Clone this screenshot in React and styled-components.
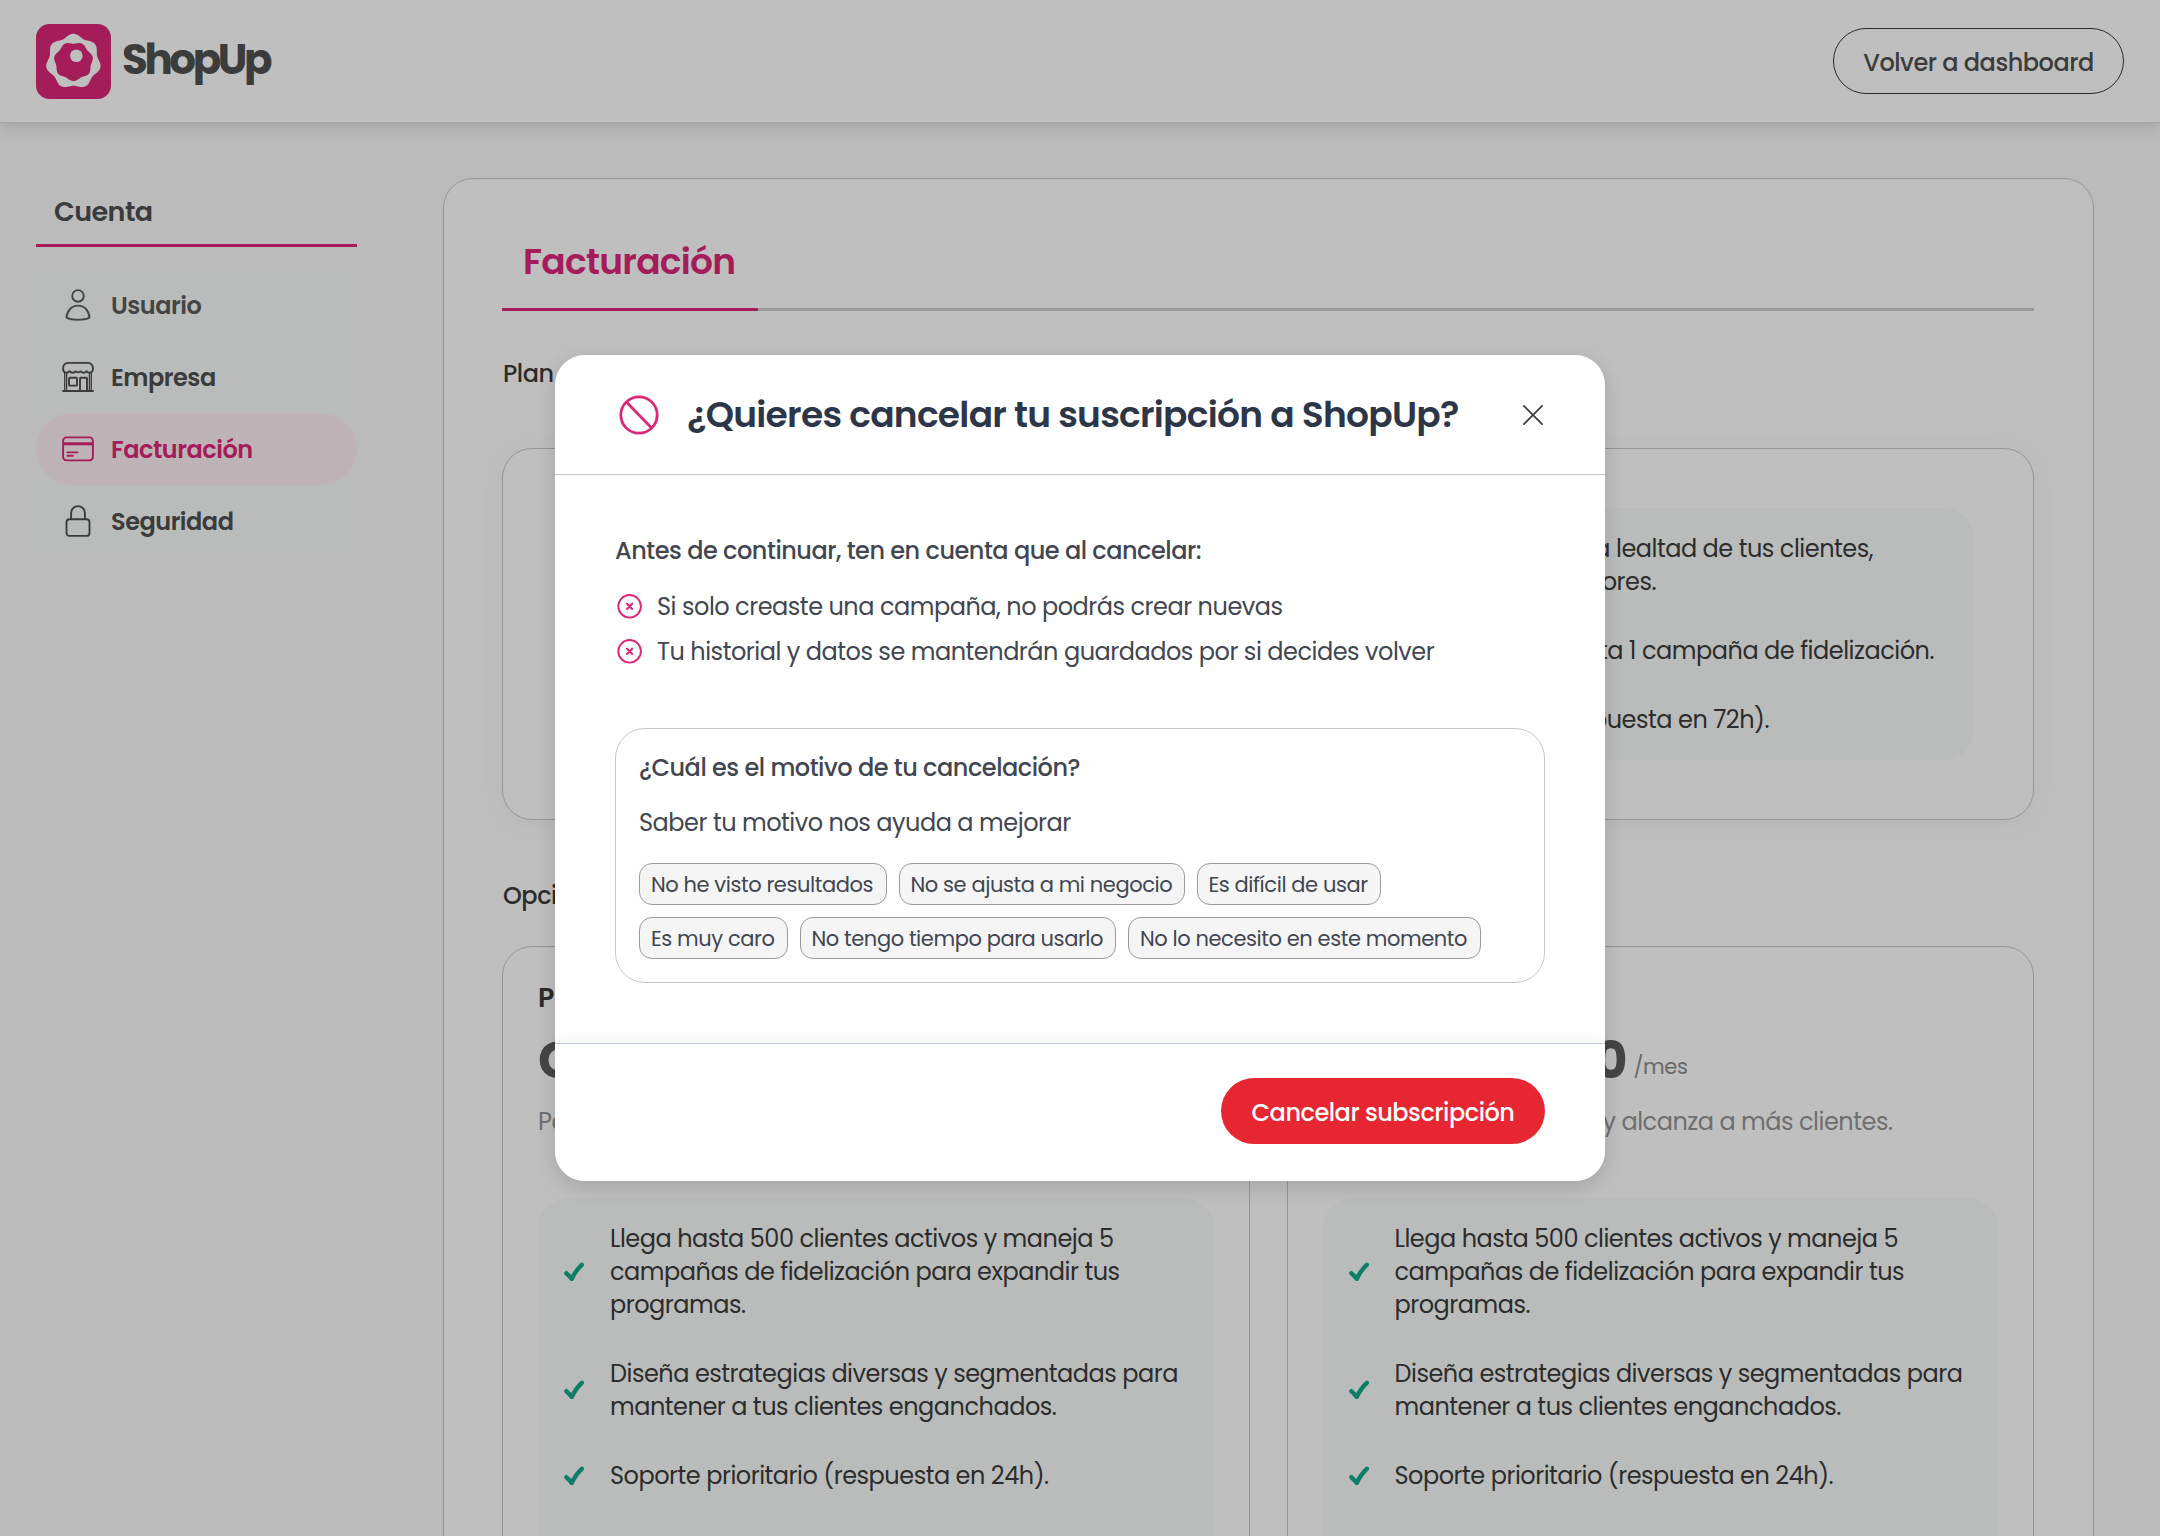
import React from 'react';
import styled, { createGlobalStyle } from 'styled-components';

const PINK = '#db2777';

const GlobalStyle = createGlobalStyle`
  *, *::before, *::after { box-sizing: border-box; letter-spacing: -0.02em; }
  body {
    margin: 0;
    background: #fafafa;
    font-family: Poppins, Inter, "Open Sans", sans-serif;
    font-size: 24px;
    line-height: 33px;
    color: #3b3b3b;
  }
  button { font: inherit; margin: 0; cursor: pointer; white-space: nowrap; }
`;

/* ---------- Page shell ---------- */
const Page = styled.div`
  position: relative;
  height: 1536px;
  overflow: hidden;
  display: flex;
  flex-direction: column;
`;

const Header = styled.header`
  flex: none;
  display: flex;
  align-items: center;
  justify-content: space-between;
  height: 123px;
  padding: 0 36px;
  background: #fff;
  border-bottom: 1px solid #d9dce8;
  box-shadow: 0 4px 15px rgba(0, 0, 0, 0.14);
`;

const Brand = styled.div`
  display: flex;
  align-items: center;
  gap: 11px;
`;

const BrandName = styled.span`
  font-size: 42px;
  font-weight: 700;
  line-height: 50px;
  letter-spacing: -3.4px;
  color: #505050;
  padding-bottom: 3px;
`;

const OutlineButton = styled.button`
  width: 291px;
  height: 66px;
  padding: 2px 0 0;
  border: 1px solid #383838;
  border-radius: 33px;
  background: transparent;
  color: #505050;
  font-weight: 500;
`;

const Content = styled.div`
  flex: 1;
  min-height: 0;
  display: flex;
  gap: 86px;
  padding: 55px 66px 0 36px;
`;

/* ---------- Sidebar ---------- */
const Sidebar = styled.aside`
  flex: none;
  width: 321px;
`;

const SidebarTitle = styled.h2`
  margin: 0 0 22px;
  padding: 2px 18px 0;
  border-bottom: 3px solid ${PINK};
  font-size: 27px;
  font-weight: 600;
  line-height: 64px;
  color: #4f4f4f;
`;

const NavList = styled.nav`
  display: flex;
  flex-direction: column;
  background: #f8fbfa;
`;

const NavItem = styled.a`
  display: flex;
  align-items: center;
  gap: 17px;
  height: 72px;
  padding-left: 26px;
  border-radius: 36px;
  font-weight: 600;
  color: ${(p) => (p.$active ? PINK : p.$soft ? '#5c5c5c' : '#4f4f4f')};
  background: ${(p) => (p.$active ? '#feeff4' : 'transparent')};
`;

/* Label that sits next to an icon, on the icon's optical centre */
const IconLabel = styled.span`
  padding-top: 1px;
  white-space: nowrap;
`;

/* ---------- Billing panel ---------- */
const Panel = styled.main`
  flex: 1;
  height: 1700px;
  padding: 34px 59px 34px 58px;
  border: 1px solid #c9c9c9;
  border-radius: 30px;
  background: #fff;
`;

const Tabs = styled.div`
  display: flex;
  border-bottom: 3px solid #cfcfcf;
`;

const Tab = styled.div`
  width: 256px;
  height: 98px;
  margin-bottom: -3px;
  padding: 0 21px;
  border-bottom: 3px solid ${PINK};
  color: ${PINK};
  font-size: 36px;
  font-weight: 600;
  line-height: 97px;
`;

const SectionTitle = styled.h3`
  margin: ${(p) => p.$mt}px 0 ${(p) => p.$mb}px;
  padding-left: 1px;
  font-size: 24px;
  font-weight: 500;
  line-height: 36px;
`;

const PlanCard = styled.section`
  display: flex;
  justify-content: flex-end;
  align-items: center;
  height: 372px;
  padding: 0 59px;
  border: 1px solid #c9c9c9;
  border-radius: 30px;
  background: #fff;
  box-shadow: 0 4px 26px rgba(0, 0, 0, 0.05);
`;

const Benefits = styled.ul`
  display: flex;
  flex-direction: column;
  gap: 36px;
  margin: ${(p) => p.$mt || 0}px 0 0;
  padding: 24px 0 24px 26px;
  width: ${(p) => (p.$w ? p.$w + 'px' : 'auto')};
  min-height: ${(p) => p.$min || 0}px;
  border-radius: 30px;
  background: #f8fbfa;
  list-style: none;
`;

const Benefit = styled.li`
  display: flex;
  align-items: center;
  gap: 25px;
`;

const BenefitText = styled.div`
  flex: 1;
  display: flex;
  flex-direction: column;
`;

const Line = styled.span`
  white-space: nowrap;
  align-self: ${(p) => (p.$end !== undefined ? 'flex-end' : 'flex-start')};
  padding-right: ${(p) => p.$end || 0}px;
`;

const Options = styled.div`
  display: grid;
  grid-template-columns: 1fr 1fr;
  gap: 37px;
`;

const OptionCard = styled.section`
  height: 760px;
  padding: 33px 35px;
  border: 1px solid #c9c9c9;
  border-radius: 30px;
  background: #fff;
`;

const OptionName = styled.h4`
  margin: 0;
  font-size: 27px;
  font-weight: 600;
  line-height: 36px;
`;

const Price = styled.div`
  display: flex;
  align-items: flex-end;
  gap: 7px;
  margin-top: 14px;
  height: 60px;
`;

const Amount = styled.strong`
  width: ${(p) => (p.$w ? p.$w + 'px' : 'auto')};
  text-align: right;
  font-size: 51px;
  font-weight: 700;
  line-height: 60px;
  color: #5c5c5c;
`;

const Period = styled.span`
  margin-bottom: 8px;
  font-size: 21px;
  line-height: 30px;
  color: #8c8c8c;
`;

const Description = styled.p`
  margin: 15px 0 0;
  width: ${(p) => (p.$w ? p.$w + 'px' : 'auto')};
  text-align: ${(p) => (p.$w ? 'right' : 'left')};
  color: #949494;
`;

/* ---------- Modal ---------- */
const Overlay = styled.div`
  position: absolute;
  inset: 0;
  display: flex;
  align-items: center;
  justify-content: center;
  background: rgba(0, 0, 0, 0.25);
`;

const ModalShadow = styled.div`
  border-radius: 30px;
  box-shadow: 0 6px 20px rgba(0, 0, 0, 0.14);
`;

const Modal = styled.div`
  display: flex;
  flex-direction: column;
  width: 1050px;
  height: 826px;
  overflow: hidden;
  border-radius: 30px;
  background: #fff;
  color: #414651;
`;

const ModalHeader = styled.header`
  flex: none;
  display: flex;
  align-items: center;
  height: 120px;
  padding: 1px 62px 0 64px;
  border-bottom: 1px solid #c4c4c4;
`;

const ModalTitle = styled.h1`
  flex: 1;
  margin: 0 0 0 28px;
  font-size: 36px;
  font-weight: 600;
  line-height: 48px;
  white-space: nowrap;
  color: #2d3648;
`;

const ModalBody = styled.div`
  flex: 1;
  padding: 58px 60px 0;
`;

const Lead = styled.p`
  margin: 0;
  font-weight: 500;
  line-height: 36px;
`;

const WarnList = styled.ul`
  display: flex;
  flex-direction: column;
  gap: 9px;
  margin: 19px 0 59px;
  padding: 0 0 0 2px;
  list-style: none;
`;

const WarnItem = styled.li`
  display: flex;
  align-items: center;
  gap: 15px;
  height: 36px;
`;

const ReasonBox = styled.section`
  height: 255px;
  padding: 21px 23px 0;
  border: 1px solid #c8c8c8;
  border-radius: 30px;
`;

const Hint = styled.p`
  margin: 19px 0 22px;
  line-height: 36px;
`;

const Chips = styled.div`
  display: flex;
  flex-wrap: wrap;
  gap: 12px;
`;

const Chip = styled.button`
  height: 42px;
  width: ${(p) => p.$w}px;
  padding: 1px 0 0 11px;
  text-align: left;
  border: 1px solid #9a9a9a;
  border-radius: 13px;
  background: #f5f5f5;
  color: #414651;
  font-size: 21px;
  line-height: 30px;
`;

const ModalFooter = styled.footer`
  flex: none;
  display: flex;
  justify-content: flex-end;
  height: 138px;
  padding: 34px 60px 0;
  border-top: 1px solid #c0c8dc;
  background: #fff;
  box-shadow: 0 -3px 14px rgba(0, 0, 0, 0.06);
`;

const DangerButton = styled.button`
  width: 324px;
  height: 66px;
  padding: 2px 0 0;
  border: 0;
  border-radius: 33px;
  background: #e62630;
  color: #fff;
  font-weight: 500;
`;

/* ---------- Icons ---------- */
const wavy = (cx, cy, r, amp) => {
  const pts = [];
  for (let i = 0; i < 140; i++) {
    const a = (i / 140) * Math.PI * 2;
    const rr = r + amp * Math.cos(7 * a);
    pts.push(`${(cx + rr * Math.sin(a)).toFixed(2)} ${(cy - rr * Math.cos(a)).toFixed(2)}`);
  }
  return `M${pts.join('L')}Z`;
};

const Logo = () => (
  <svg width="75" height="75" viewBox="0 0 75 75">
    <rect width="75" height="75" rx="13.5" fill={PINK} />
    <path d={wavy(37.4, 37.4, 26, 1.7)} fill="#fff" />
    <path d={wavy(37.5, 37.4, 18.7, -1)} fill={PINK} />
    <circle cx="40.3" cy="31.8" r="6.3" fill="#fff" />
  </svg>
);

const Line32 = ({ children }) => (
  <svg width="32" height="32" viewBox="0 0 32 32" fill="none" stroke="currentColor"
    strokeWidth="1.9" strokeLinecap="round" strokeLinejoin="round" overflow="visible">{children}</svg>
);

const UserIcon = () => (
  <Line32>
    <circle cx="16" cy="6.9" r="5.8" />
    <path d="M4.5 28.6C5 21.6 9.6 16.6 16 16.6S27 21.6 27.5 28.6C24.6 30 20.6 30.7 16 30.7S7.4 30 4.5 28.6Z" />
  </Line32>
);

const StoreIcon = () => (
  <Line32>
    <path d="M6.2 1.9H25.8C28.8 1.9 30.9 4.2 30.9 7.6C30.9 10 29.6 11.8 27.7 11.8C26.3 11.8 25.3 11.2 24.4 10.2C23.4 11.6 22 12 20.8 11.6C19.7 11.3 19 10.8 18.6 10.2C17.6 11.6 14.4 11.6 13.4 10.2C12.6 11.4 11.4 11.9 10.2 11.7C9 11.5 8.2 10.9 7.6 10.2C6.7 11.2 5.7 11.8 4.3 11.8C2.4 11.8 1.1 10 1.1 7.6C1.1 4.2 3.2 1.9 6.2 1.9Z" />
    <path d="M2.7 12V29.6M29.3 12V29.6M4.6 12V29.6M27.4 12V29.6" strokeWidth="1.3" />
    <path d="M1 30H31" />
    <rect x="7" y="16.8" width="8" height="7.8" rx="0.6" />
    <path d="M18 29.4V17.3A.6 .6 0 0 1 18.6 16.7H24.4A.6 .6 0 0 1 25 17.3V29.4" />
  </Line32>
);

const CardIcon = () => (
  <Line32>
    <rect x="1.1" y="4.4" width="29.8" height="23" rx="3.4" />
    <path d="M1.5 10.8H30.5" strokeWidth="3" strokeLinecap="butt" />
    <path d="M5.4 19.4H15.4M5.4 22.8H10.8" />
  </Line32>
);

const LockIcon = () => (
  <Line32>
    <rect x="4.5" y="14.2" width="23" height="16.7" rx="3" />
    <path d="M9.1 13.9V8A6.9 6.9 0 0 1 22.9 8V13.9" />
  </Line32>
);

const CheckIcon = () => (
  <svg width="21" height="20" viewBox="0 0 21 20" fill="none" stroke="#15a888" strokeWidth="4.4"
    strokeLinecap="round" strokeLinejoin="round">
    <path d="M2.4 11.2L7.8 16.6" />
    <path d="M7.8 16.8C10.3 11.5 13.4 6.8 17.8 2.8" />
  </svg>
);

const BanIcon = () => (
  <svg width="40" height="40" viewBox="0 0 40 40" fill="none" stroke={PINK} strokeWidth="2.8">
    <circle cx="20" cy="20" r="18.2" />
    <path d="M7.4 7L32.6 33" />
  </svg>
);

const CloseIcon = () => (
  <svg width="20" height="20" viewBox="0 0 20 20" fill="none" stroke="#3f3f3f" strokeWidth="1.8" strokeLinecap="round">
    <path d="M0.9 0.9L19.1 19.1M19.1 0.9L0.9 19.1" />
  </svg>
);

const CrossCircleIcon = () => (
  <svg width="25" height="25" viewBox="0 0 25 25" fill="none" stroke={PINK}>
    <circle cx="12.6" cy="12.3" r="11.3" strokeWidth="1.9" />
    <path d="M10 9.7L15.2 14.9M15.2 9.7L10 14.9" strokeWidth="2.1" strokeLinecap="round" />
  </svg>
);

/* ---------- Data ---------- */
const NAV = [
  { label: 'Usuario', Icon: UserIcon, soft: true },
  { label: 'Empresa', Icon: StoreIcon },
  { label: 'Facturación', Icon: CardIcon, active: true },
  { label: 'Seguridad', Icon: LockIcon },
];

const CURRENT = [
  [['Gestiona la lealtad de tus clientes,', 101], ['sin límite de operadores.', 318]],
  [['Crea hasta 1 campaña de fidelización.', 40]],
  [['Soporte estándar (respuesta en 72h).', 205]],
];

const PRO = [
  [['Llega hasta 500 clientes activos y maneja 5'], ['campañas de fidelización para expandir tus'], ['programas.']],
  [['Diseña estrategias diversas y segmentadas para'], ['mantener a tus clientes enganchados.']],
  [['Soporte prioritario (respuesta en 24h).']],
];

const REASONS = [
  ['No he visto resultados', 247.5],
  ['No se ajusta a mi negocio', 286],
  ['Es difícil de usar', 184.5],
  ['Es muy caro', 148.5],
  ['No tengo tiempo para usarlo', 316.5],
  ['No lo necesito en este momento', 352.5],
];

const BenefitList = ({ items, ...rest }) => (
  <Benefits {...rest}>
    {items.map((lines) => (
      <Benefit key={lines[0][0]}>
        <CheckIcon />
        <BenefitText>
          {lines.map(([text, end]) => (
            <Line key={text} $end={end}>{text}</Line>
          ))}
        </BenefitText>
      </Benefit>
    ))}
  </Benefits>
);

export default function App() {
  return (
    <Page>
      <GlobalStyle />
      <Header>
        <Brand>
          <Logo />
          <BrandName>ShopUp</BrandName>
        </Brand>
        <OutlineButton>Volver a dashboard</OutlineButton>
      </Header>

      <Content>
        <Sidebar>
          <SidebarTitle>Cuenta</SidebarTitle>
          <NavList>
            {NAV.map(({ label, Icon, active, soft }) => (
              <NavItem key={label} $active={active} $soft={soft}>
                <Icon />
                <IconLabel>{label}</IconLabel>
              </NavItem>
            ))}
          </NavList>
        </Sidebar>

        <Panel>
          <Tabs><Tab>Facturación</Tab></Tabs>
          <SectionTitle $mt={45} $mb={56}>Plan</SectionTitle>
          <PlanCard>
            <BenefitList items={CURRENT} $w={800} />
          </PlanCard>
          <SectionTitle $mt={58} $mb={32}>Opciones</SectionTitle>
          <Options>
            <OptionCard>
              <OptionName>Pro</OptionName>
              <Price><Amount>Gratis</Amount></Price>
              <Description>Para ti.</Description>
              <BenefitList items={PRO} $mt={60} $min={420} />
            </OptionCard>
            <OptionCard>
              <OptionName>Plus</OptionName>
              <Price>
                <Amount $w={304}>$190.000</Amount>
                <Period>/mes</Period>
              </Price>
              <Description $w={570}>Crece y alcanza a más clientes.</Description>
              <BenefitList items={PRO} $mt={60} $min={420} />
            </OptionCard>
          </Options>
        </Panel>
      </Content>

      <Overlay>
        <ModalShadow>
          <Modal>
            <ModalHeader>
              <BanIcon />
              <ModalTitle>¿Quieres cancelar tu suscripción a ShopUp?</ModalTitle>
              <CloseIcon />
            </ModalHeader>
            <ModalBody>
              <Lead>Antes de continuar, ten en cuenta que al cancelar:</Lead>
              <WarnList>
                <WarnItem>
                  <CrossCircleIcon />
                  <IconLabel>Si solo creaste una campaña, no podrás crear nuevas</IconLabel>
                </WarnItem>
                <WarnItem>
                  <CrossCircleIcon />
                  <IconLabel>Tu historial y datos se mantendrán guardados por si decides volver</IconLabel>
                </WarnItem>
              </WarnList>
              <ReasonBox>
                <Lead>¿Cuál es el motivo de tu cancelación?</Lead>
                <Hint>Saber tu motivo nos ayuda a mejorar</Hint>
                <Chips>
                  {REASONS.map(([text, w]) => (
                    <Chip key={text} $w={w}>{text}</Chip>
                  ))}
                </Chips>
              </ReasonBox>
            </ModalBody>
            <ModalFooter>
              <DangerButton>Cancelar subscripción</DangerButton>
            </ModalFooter>
          </Modal>
        </ModalShadow>
      </Overlay>
    </Page>
  );
}
